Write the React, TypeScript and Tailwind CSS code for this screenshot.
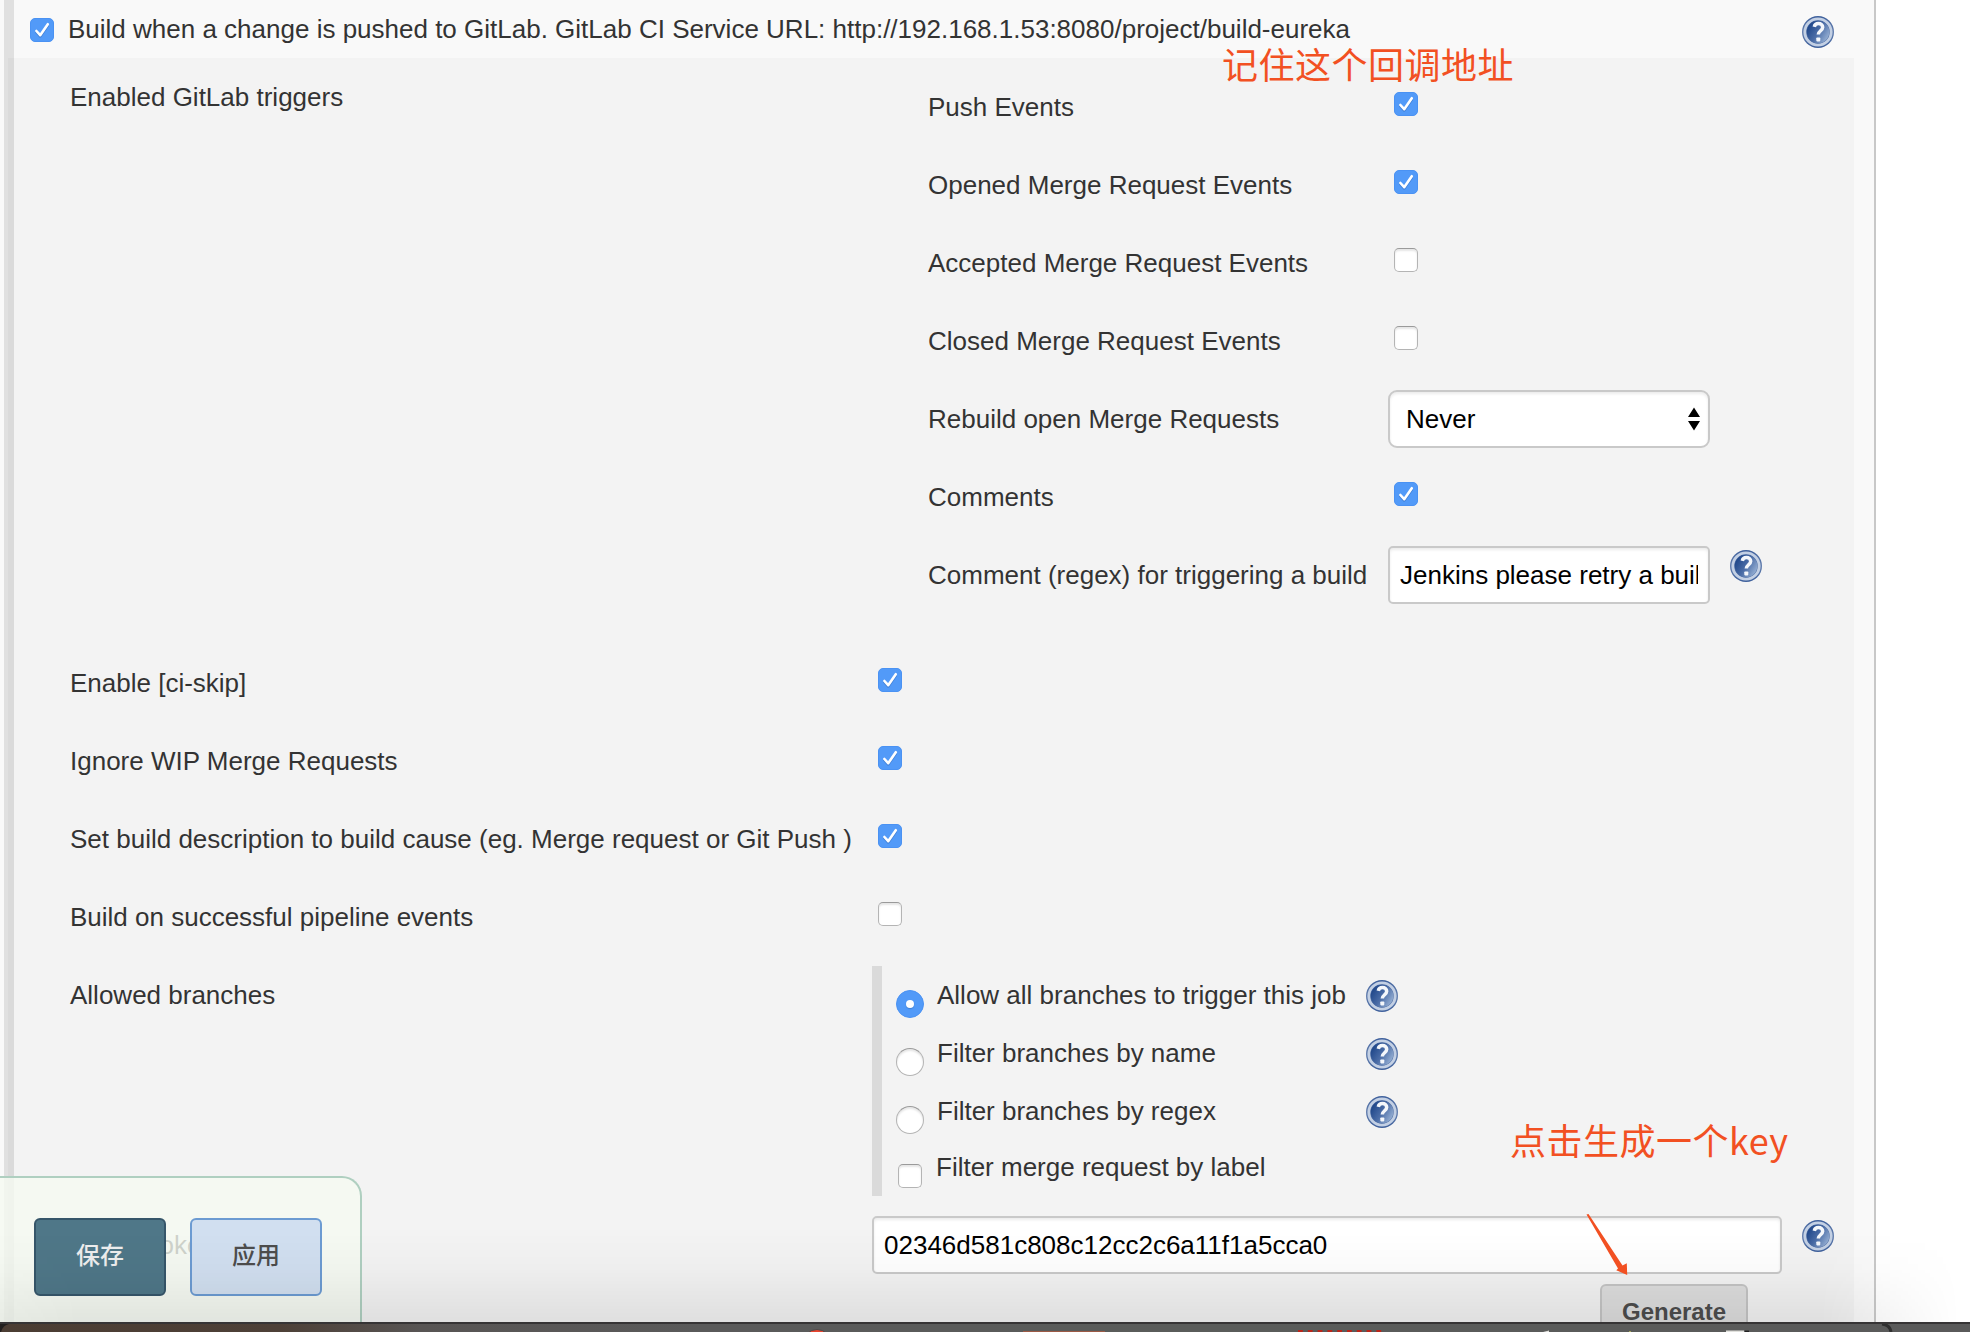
import React from "react";

function Check({ on = true }: { on?: boolean }) {
  return on ? (
    <span className="block size-6 shrink-0 rounded-[5px] border border-[#4a92f3] bg-[#529af8]">
      <svg viewBox="1 1 22 22" className="block size-full" fill="none" strokeLinecap="round" strokeLinejoin="round">
        <path d="M6.4 14.2 10.2 18.4 17.8 7.4" stroke="#3f7fd6" strokeWidth="2.6" />
        <path d="M6.4 13 10.2 17.2 17.8 6.2" stroke="#fff" strokeWidth="2.6" />
      </svg>
    </span>
  ) : (
    <span className="block size-6 shrink-0 rounded-[5px] border border-[#b4b4b4] border-t-[#9a9a9a] bg-white shadow-[inset_0_2px_2px_#e6e6e6]" />
  );
}

function Radio({ on = false }: { on?: boolean }) {
  return on ? (
    <span className="flex size-7 shrink-0 items-center justify-center rounded-full border border-[#4a92f3] bg-[#529af8]">
      <span className="size-2 rounded-full bg-white shadow-[0_1px_1px_#3f7fd6]" />
    </span>
  ) : (
    <span className="block size-7 shrink-0 rounded-full border border-[#b4b4b4] border-t-[#9a9a9a] bg-white shadow-[inset_0_2px_2px_#e6e6e6]" />
  );
}

function Help() {
  return (
    <svg viewBox="0 0 32 32" className="block size-8 shrink-0">
      <defs>
        <linearGradient id="helpFill" x1="0" y1="0.2" x2="1" y2="0.8">
          <stop offset="0.1" stopColor="#234a8c" />
          <stop offset="0.5" stopColor="#4a6ca6" />
          <stop offset="1" stopColor="#9db6d8" />
        </linearGradient>
        <linearGradient id="helpRim" x1="0" y1="0" x2="0" y2="1">
          <stop offset="0" stopColor="#3d5f9b" />
          <stop offset="0.5" stopColor="#6580af" />
          <stop offset="1" stopColor="#3d5f9b" />
        </linearGradient>
      </defs>
      <circle cx="16" cy="16" r="16" fill="url(#helpRim)" />
      <circle cx="16" cy="16" r="13.2" fill="none" stroke="#c3d0e4" strokeWidth="2.8" />
      <circle cx="16" cy="16" r="11.3" fill="url(#helpFill)" />
      <path d="M12.3 10.8c.4-2.1 2-3.2 4.1-3.2 2.5 0 4.3 1.5 4.3 3.7 0 3.3-4.4 3.6-4.4 7.3" fill="none" stroke="#f4f7fb" strokeWidth="3.5" />
      <rect x="14.3" y="21.4" width="4" height="4" rx="0.8" fill="#f4f7fb" />
    </svg>
  );
}

function TriggerRow({ label, children }: { label: string; children: React.ReactNode }) {
  return (
    <div className="flex h-[78px]">
      <div className="mt-6 w-[462px] shrink-0 pl-0.5">{label}</div>
      {children}
    </div>
  );
}

function OptionRow({ label, children }: { label: string; children: React.ReactNode }) {
  return (
    <div className="flex h-[78px] pl-[56px]">
      <div className="mt-6 w-[808px] shrink-0">{label}</div>
      <div className="mt-6">{children}</div>
    </div>
  );
}

function BranchRow({ label, radio }: { label: string; radio: boolean }) {
  return (
    <div className="flex h-[58px]">
      <div className="mt-2.5 w-[41px]">
        <Radio on={radio} />
      </div>
      <div className="w-[429px]">{label}</div>
      <Help />
    </div>
  );
}

const topTriggers = [
  { label: "Push Events", on: true },
  { label: "Opened Merge Request Events", on: true },
  { label: "Accepted Merge Request Events", on: false },
  { label: "Closed Merge Request Events", on: false },
];

const options = [
  { label: "Enable [ci-skip]", on: true },
  { label: "Ignore WIP Merge Requests", on: true },
  { label: "Set build description to build cause (eg. Merge request or Git Push )", on: true },
  { label: "Build on successful pipeline events", on: false },
];

function Dock() {
  return (
    <div className="h-2.5 shrink-0 overflow-hidden border-t-2 border-[#363435] bg-[linear-gradient(90deg,#4b3d33_0px,#4d4037_280px,#585554_420px,#5a5a5a_700px,#5a5c5a_1200px,#5a5a5a_1970px)]">
      <svg width="1970" height="8" viewBox="0 0 1970 8" className="block">
        <path d="M0 0H9Q3 1 1 8H0Z" fill="#221f1e" />
        <path d="M1882 0Q1890 1 1891 8" fill="none" stroke="#2f2f2f" strokeWidth="3" />
        <circle cx="817" cy="19.5" r="14" fill="#e8442e" stroke="#4b4b4b" />
        <rect x="1023" y="7" width="82" height="1" fill="#9c5a45" />
        <path d="M1298 7.2H1384" stroke="#bd2418" strokeWidth="2.4" strokeDasharray="4.8 5" />
        <path d="M1543 8 1549 6.4V8ZM1726 6.6H1744V8H1726Z" fill="#e0e0dc" />
        <rect x="1745" y="6.6" width="4" height="1.4" fill="#222" />
        <rect x="1629" y="7" width="2" height="1" fill="#a7a95a" />
      </svg>
    </div>
  );
}

export default function App() {
  return (
    <div className="relative flex h-[1332px] w-[1970px] flex-col overflow-hidden bg-white font-['Liberation_Sans','Noto_Sans_CJK_SC',sans-serif] text-[26px] leading-[30px] whitespace-nowrap text-[#333]">
      <div className="relative flex h-[1322px] shrink-0 overflow-hidden">
        <div className="flex w-[1876px] shrink-0 border-r-2 border-[#c8c8c8] bg-[#f9f9f9] pl-1">
          <div className="flex w-[10px] shrink-0 flex-col bg-[#e0e0e0] pt-[58px] pl-1">
            <div className="flex-1 bg-[#dadada]" />
          </div>
          <div className="flex w-[1860px] flex-col">
            <div className="flex h-[58px] shrink-0 pl-4">
              <div className="mt-[18px] w-[38px]">
                <Check />
              </div>
              <div className="mt-3.5 w-[1734px]">
                Build when a change is pushed to GitLab. GitLab CI Service URL: http://192.168.1.53:8080/project/build-eureka
              </div>
              <div className="mt-4">
                <Help />
              </div>
            </div>
            <div className="w-[1840px] flex-1 bg-[#f3f3f3] pt-2.5">
              <div className="flex pl-[56px]">
                <div className="mt-3.5 w-[856px] shrink-0">Enabled GitLab triggers</div>
                <div className="w-[900px]">
                  {topTriggers.map((t) => (
                    <TriggerRow key={t.label} label={t.label}>
                      <div className="mt-6 pl-1.5">
                        <Check on={t.on} />
                      </div>
                    </TriggerRow>
                  ))}
                  <TriggerRow label="Rebuild open Merge Requests">
                    <div className="mt-2.5 flex h-[58px] w-[322px] items-center justify-between rounded-[9px] border-2 border-[#c9c9c9] bg-white pr-[8px] pl-[16px] text-black shadow-[inset_0_2px_3px_#ececec]">
                      <span>Never</span>
                      <svg width="12" height="24" viewBox="0 0 12 24" fill="#000">
                        <path d="M6 0.5 12 10H0ZM0 14H12L6 23.5Z" />
                      </svg>
                    </div>
                  </TriggerRow>
                  <TriggerRow label="Comments">
                    <div className="mt-6 pl-1.5">
                      <Check />
                    </div>
                  </TriggerRow>
                  <TriggerRow label="Comment (regex) for triggering a build">
                    <div className="mt-2.5 flex h-[58px] w-[322px] items-center rounded-[5px] border-2 border-[#c9c9c9] bg-white px-[10px] text-black shadow-[inset_0_2px_3px_#ececec]">
                      <span className="w-full overflow-hidden">Jenkins please retry a build</span>
                    </div>
                    <div className="mt-3.5 ml-5">
                      <Help />
                    </div>
                  </TriggerRow>
                </div>
              </div>
              <div className="mt-[30px]">
                {options.map((o) => (
                  <OptionRow key={o.label} label={o.label}>
                    <Check on={o.on} />
                  </OptionRow>
                ))}
              </div>
              <div className="flex h-[250px] pl-[56px]">
                <div className="mt-6 w-[802px] shrink-0">Allowed branches</div>
                <div className="mt-2.5 h-[230px] border-l-[10px] border-[#dadada] pt-3.5 pl-3.5">
                  <BranchRow label="Allow all branches to trigger this job" radio />
                  <BranchRow label="Filter branches by name" radio={false} />
                  <BranchRow label="Filter branches by regex" radio={false} />
                  <div className="flex pl-0.5">
                    <div className="mt-2.5 w-[38px]">
                      <Check on={false} />
                    </div>
                    <div className="-mt-0.5">Filter merge request by label</div>
                  </div>
                </div>
              </div>
              <div className="flex h-[78px] pl-[56px]">
                <div className="mt-6 w-[802px] shrink-0">Secret token</div>
                <div className="mt-2.5 flex h-[58px] w-[910px] shrink-0 items-center rounded-[5px] border-2 border-[#c9c9c9] bg-white px-[10px] text-black shadow-[inset_0_2px_3px_#ececec]">
                  02346d581c808c12cc2c6a11f1a5cca0
                </div>
                <div className="mt-3.5 ml-5">
                  <Help />
                </div>
              </div>
              <div className="flex justify-end pr-[106px]">
                <div className="flex h-[56px] w-[148px] items-center justify-center rounded-[6px] border-2 border-[#c4c4c4] bg-[#dddddd] pb-px text-[24px] font-bold text-[#4d4d4d]">
                  Generate
                </div>
              </div>
            </div>
          </div>
        </div>

        <div className="absolute bottom-0 left-0 flex h-[146px] w-[362px] gap-6 rounded-tr-[20px] border-t-2 border-r-2 border-[#afcfc0] bg-[#f5faf1]/80 pt-10 pl-[34px] font-['Noto_Sans_CJK_SC',sans-serif] text-[24px] font-medium">
          <div className="flex h-[78px] w-[132px] items-center justify-center rounded-[6px] border-2 border-[#36566a] bg-[#4f7788] pb-1.5 text-[#eeeeee]">
            保存
          </div>
          <div className="flex h-[78px] w-[132px] items-center justify-center rounded-[6px] border-2 border-[#6c9bd2] bg-[#d1dff0] pb-1.5 text-[#4d4d4d]">
            应用
          </div>
        </div>

        <div className="pointer-events-none absolute bottom-0 left-0 h-[90px] w-full bg-[linear-gradient(180deg,transparent,rgba(0,0,0,0.018)_40%,rgba(0,0,0,0.08))] [mask-image:linear-gradient(90deg,rgba(0,0,0,0.7)_0,#000_80px,#000_1820px,transparent_1960px)]" />
      </div>

      <Dock />

      <div className="absolute top-[38px] left-[1222px] font-['Noto_Sans_CJK_SC',sans-serif] text-[36px] leading-[50px] font-normal tracking-[0.5px] text-[#f25022]">
        记住这个回调地址
      </div>
      <div className="absolute top-[1114px] left-[1510px] font-['Noto_Sans_CJK_SC',sans-serif] text-[36px] leading-[50px] font-normal tracking-[0.5px] text-[#f25022]">
        点击生成一个key
      </div>
      <svg className="absolute top-[1212px] left-[1584px]" width="46" height="66" viewBox="1584 1212 46 66" fill="#f25022">
        <path d="M1586.5 1214.5 1588.5 1214 1622.5 1265.5 1626.8 1263.2 1627.2 1275 1616.3 1270.3 1618 1268.5Z" />
      </svg>
    </div>
  );
}
